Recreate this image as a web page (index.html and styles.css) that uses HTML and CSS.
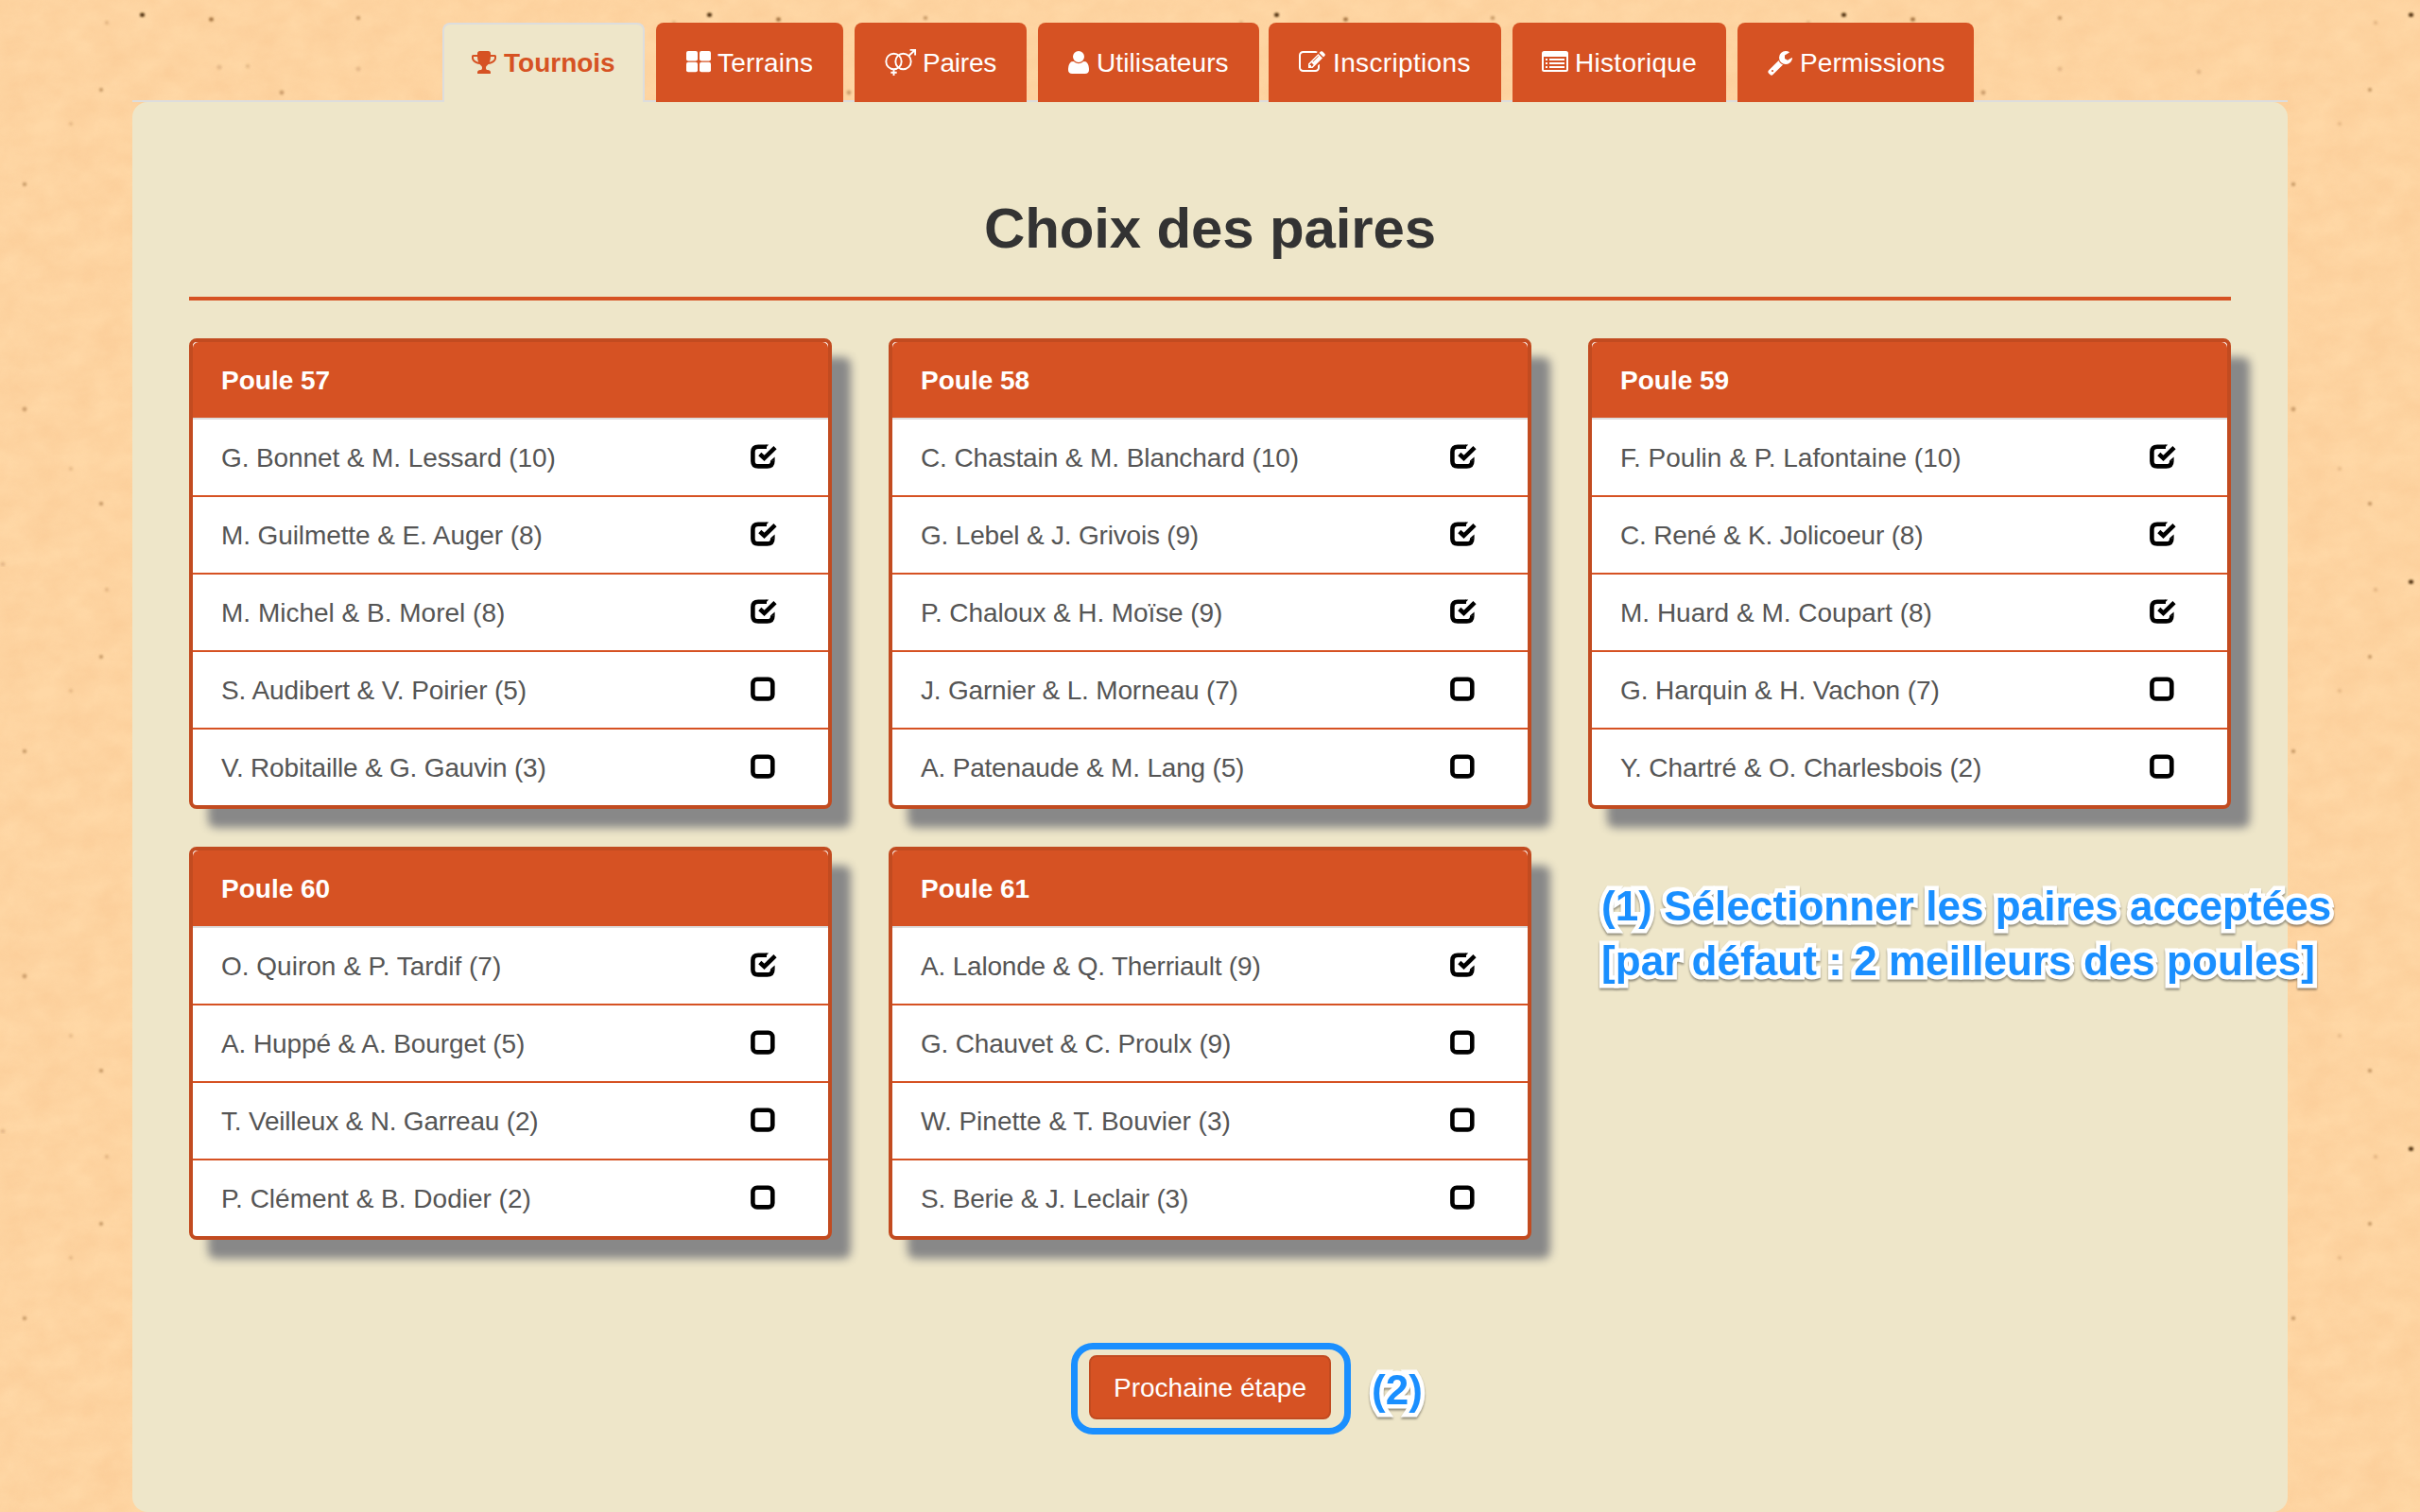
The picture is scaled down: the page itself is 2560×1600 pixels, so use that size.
FILE: index.html
```html
<!DOCTYPE html>
<html lang="fr">
<head>
<meta charset="utf-8">
<title>Choix des paires</title>
<link rel="stylesheet" href="styles.css">
</head>
<body>
<svg class="sprite" aria-hidden="true">
  <symbol id="trophy" viewBox="64 0 1664 1792"><path d="M522 883q-74-162-74-371h-256v96q0 78 94.5 162t235.5 113zm1078-275v-96h-256q0 209-74 371 141-29 235.5-113t94.5-162zm128-128v128q0 71-41.5 143t-112 130-173 97.5-215.5 44.5q-42 54-95 95-38 34-52.5 72.5t-14.5 89.5q0 54 30.5 91t97.5 37q75 0 133.5 45.5t58.5 114.5v64q0 14-9 23t-23 9h-832q-14 0-23-9t-9-23v-64q0-69 58.5-114.5t133.5-45.5q67 0 97.5-37t30.5-91q0-51-14.5-89.5t-52.5-72.5q-53-41-95-95-113-5-215.5-44.5t-173-97.5-112-130-41.5-143v-128q0-40 28-68t68-28h288v-96q0-66 47-113t113-47h576q66 0 113 47t47 113v96h288q40 0 68 28t28 68z"/></symbol>
  <symbol id="grid" viewBox="0 0 26 28"><rect y="2" width="12" height="10.4" rx="2"/><rect x="14" y="2" width="12" height="10.4" rx="2"/><rect y="13.8" width="12" height="10.4" rx="2"/><rect x="14" y="13.8" width="12" height="10.4" rx="2"/></symbol>
  <symbol id="pair" viewBox="0 0 34 28"><g fill="none" stroke="currentColor" stroke-width="1.9"><circle cx="9.5" cy="13" r="8.2"/><circle cx="19.5" cy="13" r="8.2"/><path d="M9.5 21.2V28M6.300 24.800h6.400M25.400 7L31.800 1M26.600.9h5.500v5.600"/></g></symbol>
  <symbol id="user" viewBox="192 0 1408 1792"><path d="M1600 1405q0 120-73 189.500t-194 69.500h-874q-121 0-194-69.500t-73-189.500q0-53 3.500-103.500t14-109 26.500-108.500 43-97.500 62-81 85.500-53.500 111.500-20q9 0 42 21.500t74.500 48 108 48 133.500 21.500 133.500-21.500 108-48 74.500-48 42-21.500q61 0 111.500 20t85.500 53.500 62 81 43 97.500 26.500 108.500 14 109 3.500 103.500zm-320-893q0 159-112.500 271.500t-271.500 112.500-271.500-112.500-112.500-271.500 112.500-271.500 271.500-112.500 271.500 112.500 112.500 271.500z"/></symbol>
  <symbol id="edit" viewBox="0 0 1792 1792"><path d="M888 1184l116-116-152-152-116 116v56h96v96h56zm440-720q-16-16-33 1l-350 350q-17 17-1 33t33-1l350-350q17-17 1-33zm80 594v190q0 119-84.500 203.500t-203.500 84.500h-832q-119 0-203.500-84.500t-84.500-203.500v-832q0-119 84.500-203.500t203.500-84.500h832q63 0 117 25 15 7 18 23 3 17-9 29l-49 49q-14 14-32 8-23-6-45-6h-832q-66 0-113 47t-47 113v832q0 66 47 113t113 47h832q66 0 113-47t47-113v-126q0-13 9-22l64-64q15-15 35-7t20 29zm-96-738l288 288-672 672h-288v-288zm444 132l-92 92-288-288 92-92q28-28 68-28t68 28l152 152q28 28 28 68t-28 68z"/></symbol>
  <symbol id="list" viewBox="0 0 28 28"><path fill-rule="evenodd" d="M2.500 2h23A2.500 2.500 0 0 1 28 4.500v17a2.500 2.500 0 0 1-2.500 2.500h-23A2.500 2.500 0 0 1 0 21.500v-17A2.500 2.500 0 0 1 2.500 2zM2 8v13.500q0 .5.5.5h23q.5 0 .5-.5V8z"/><path d="M4 10h2v2H4zM8 10h16v2H8zM4 14h2v2H4zM8 14h16v2H8zM4 18h2v2H4zM8 18h16v2H8z"/></symbol>
  <symbol id="wrench" viewBox="64 0 1664 1792"><path d="M448 1472q0-26-19-45t-45-19-45 19-19 45 19 45 45 19 45-19 19-45zm644-420l-682 682q-37 37-90 37-52 0-91-37l-106-108q-38-36-38-90 0-53 38-91l681-681q39 98 114.500 173.500t173.500 114.500zm634-435q0 39-23 106-47 134-164.500 217.500t-258.500 83.500q-185 0-316.500-131.500t-131.500-316.500 131.500-316.500 316.500-131.500q58 0 121.500 16.500t107.500 46.500q16 11 16 28t-16 28l-293 169v224l193 107q5-3 79-48.500t135.500-81 70.500-35.500q15 0 23.500 10t8.500 25z"/></symbol>
  <symbol id="on" viewBox="0 0 28 28"><path fill="none" stroke="#000" stroke-width="4.600" d="M17 3.700H8.100Q2.400 3.700 2.400 9.200v9.700q0 5.500 5.700 5.500h9.500q5.700 0 5.700-5.500v-.4"/><path d="M16.500 1.400h2.700L15 6h-1zM25.600 14.500v4.200H21v-.2z"/><path fill="none" stroke="#000" stroke-width="4.600" d="M9.800 11.500l4.700 4.300L26 4.700"/></symbol>
  <symbol id="off" viewBox="0 0 28 28"><rect x="2.400" y="3.700" width="20.900" height="20.700" rx="4.500" fill="none" stroke="#000" stroke-width="4.600"/></symbol>
</svg>

<nav class="tabs">
  <a class="tab active"><svg class="i26"><use href="#trophy"/></svg><span>Tournois</span></a>
  <a class="tab terrains"><svg class="i26"><use href="#grid"/></svg><span>Terrains</span></a>
  <a class="tab paires"><svg class="i34"><use href="#pair"/></svg><span>Paires</span></a>
  <a class="tab users"><svg class="i22"><use href="#user"/></svg><span>Utilisateurs</span></a>
  <a class="tab inscr"><svg class="i28"><use href="#edit"/></svg><span>Inscriptions</span></a>
  <a class="tab histo"><svg class="i28"><use href="#list"/></svg><span>Historique</span></a>
  <a class="tab perms"><svg class="i26"><use href="#wrench"/></svg><span>Permissions</span></a>
</nav>

<main class="panel">
  <h1>Choix des paires</h1>
  <div class="pools">
    <section class="pool">
      <h2>Poule 57</h2>
      <ul>
        <li><span class="snug">G. Bonnet &amp; M. Lessard (10)</span><svg><use href="#on"/></svg></li>
        <li><span class="snug">M. Guilmette &amp; E. Auger (8)</span><svg><use href="#on"/></svg></li>
        <li><span>M. Michel &amp; B. Morel (8)</span><svg><use href="#on"/></svg></li>
        <li><span class="snug">S. Audibert &amp; V. Poirier (5)</span><svg><use href="#off"/></svg></li>
        <li><span class="tight">V. Robitaille &amp; G. Gauvin (3)</span><svg><use href="#off"/></svg></li>
      </ul>
    </section>
    <section class="pool">
      <h2>Poule 58</h2>
      <ul>
        <li><span class="snug">C. Chastain &amp; M. Blanchard (10)</span><svg><use href="#on"/></svg></li>
        <li><span class="tight">G. Lebel &amp; J. Grivois (9)</span><svg><use href="#on"/></svg></li>
        <li><span class="snug">P. Chaloux &amp; H. Moïse (9)</span><svg><use href="#on"/></svg></li>
        <li><span class="tight">J. Garnier &amp; L. Morneau (7)</span><svg><use href="#off"/></svg></li>
        <li><span class="tight">A. Patenaude &amp; M. Lang (5)</span><svg><use href="#off"/></svg></li>
      </ul>
    </section>
    <section class="pool">
      <h2>Poule 59</h2>
      <ul>
        <li><span>F. Poulin &amp; P. Lafontaine (10)</span><svg><use href="#on"/></svg></li>
        <li><span class="tight">C. René &amp; K. Jolicoeur (8)</span><svg><use href="#on"/></svg></li>
        <li><span>M. Huard &amp; M. Coupart (8)</span><svg><use href="#on"/></svg></li>
        <li><span class="snug">G. Harquin &amp; H. Vachon (7)</span><svg><use href="#off"/></svg></li>
        <li><span class="snug">Y. Chartré &amp; O. Charlesbois (2)</span><svg><use href="#off"/></svg></li>
      </ul>
    </section>
    <section class="pool">
      <h2>Poule 60</h2>
      <ul>
        <li><span>O. Quiron &amp; P. Tardif (7)</span><svg><use href="#on"/></svg></li>
        <li><span class="snug">A. Huppé &amp; A. Bourget (5)</span><svg><use href="#off"/></svg></li>
        <li><span class="tight">T. Veilleux &amp; N. Garreau (2)</span><svg><use href="#off"/></svg></li>
        <li><span>P. Clément &amp; B. Dodier (2)</span><svg><use href="#off"/></svg></li>
      </ul>
    </section>
    <section class="pool">
      <h2>Poule 61</h2>
      <ul>
        <li><span class="tight">A. Lalonde &amp; Q. Therriault (9)</span><svg><use href="#on"/></svg></li>
        <li><span class="tight">G. Chauvet &amp; C. Proulx (9)</span><svg><use href="#off"/></svg></li>
        <li><span>W. Pinette &amp; T. Bouvier (3)</span><svg><use href="#off"/></svg></li>
        <li><span class="tight">S. Berie &amp; J. Leclair (3)</span><svg><use href="#off"/></svg></li>
      </ul>
    </section>
  </div>
  <div class="actions">
    <button class="next" type="button">Prochaine étape</button>
    <span class="ring"></span>
    <span class="note step2">(2)</span>
  </div>
</main>
<p class="note step1">(1) Sélectionner les paires acceptées<br>[par défaut : 2 meilleurs des poules]</p>
</body>
</html>
```
FILE: styles.css
```css
* { box-sizing: border-box; }

body {
  position: relative;
  width: 2560px;
  height: 1600px;
  margin: 0;
  padding: 24px 140px 0;
  overflow: hidden;
  color: #555;
  font: 28px/40px "Liberation Sans", Arial, sans-serif;
  /* speckled paper tile */
  background: #ffd8a6 url("data:image/svg+xml,%3Csvg xmlns='http://www.w3.org/2000/svg' width='600' height='600'%3E%3Cfilter id='n' x='0' y='0' width='100%25' height='100%25' color-interpolation-filters='sRGB'%3E%3CfeTurbulence type='fractalNoise' baseFrequency='.03 .04' numOctaves='4' stitchTiles='stitch'/%3E%3CfeColorMatrix values='0 0 0 0 .98 0 0 0 0 .79 0 0 0 0 .58 .9 0 0 0 -.15'/%3E%3C/filter%3E%3Cfilter id='b'%3E%3CfeGaussianBlur stdDeviation='.8'/%3E%3C/filter%3E%3Crect width='600' height='600' filter='url(%23n)'/%3E%3Cg fill='%23906030' filter='url(%23b)'%3E%3Cellipse cx='150.500' cy='15.700' rx='2.600' ry='2.200' fill='%23503010'/%3E%3Cellipse cx='223.500' cy='20.500' rx='2.500' ry='2.200' opacity='.8'/%3E%3Cg opacity='.45'%3E%3Ccircle cx='379' cy='19' r='2.300'/%3E%3Ccircle cx='107' cy='95' r='2.200'/%3E%3Ccircle cx='298' cy='98' r='2.400'/%3E%3Ccircle cx='26' cy='195' r='2.300'/%3E%3Ccircle cx='26' cy='433' r='2.400'/%3E%3Ccircle cx='107' cy='533' r='2.300'/%3E%3C/g%3E%3Cg opacity='.22'%3E%3Ccircle cx='113' cy='24' r='2.300'/%3E%3Ccircle cx='232' cy='71' r='2.600'/%3E%3Ccircle cx='262' cy='70' r='2.300'/%3E%3Ccircle cx='75' cy='131' r='2'/%3E%3Ccircle cx='75' cy='496' r='2'/%3E%3Ccircle cx='3' cy='597' r='2.500'/%3E%3Ccircle cx='379' cy='73' r='2.500'/%3E%3Ccircle cx='526' cy='76' r='2.500'/%3E%3C/g%3E%3C/g%3E%3C/svg%3E");
}

.sprite { display: none; }
svg { fill: currentColor; flex: none; overflow: visible; }

.tabs {
  display: flex;
  height: 84px;
  padding-left: 328px;
  background: linear-gradient(#ddd, #ddd) 0 100% / 100% 2px no-repeat;
}
.tab {
  display: flex;
  width: 214px;
  height: 84px;
  margin-right: 12px;
  padding: 28px 0 0 32px;
  border-radius: 8px 8px 0 0;
  background: #d65223;
  color: #fff;
  line-height: 30px;
  white-space: nowrap;
}
.tab svg { height: 28px; margin-right: 7px; }
.tab.active {
  padding: 26px 0 0 29px;
  border: 2px solid #ddd;
  border-bottom: 0;
  background: #eee6c9;
  color: #d65223;
  font-weight: 700;
}
.tab.active svg { margin-right: 8px; }
.tab.terrains { width: 198px; letter-spacing: .2px; }
.tab.paires { width: 182px; letter-spacing: -.2px; }
.tab.paires svg { margin-right: 6px; }
.tab.users { width: 234px; margin-right: 10px; letter-spacing: .1px; }
.tab.users svg { margin-right: 8px; }
.tab.inscr { width: 246px; letter-spacing: .35px; }
.tab.inscr svg { margin-right: 8px; }
.tab.histo { width: 226px; padding-left: 31px; letter-spacing: .3px; }
.tab.perms { width: 250px; letter-spacing: .1px; }
.tab.perms svg { margin-right: 8px; }
.i22 { width: 22px; }
.i26 { width: 26px; }
.i28 { width: 28px; }
.i34 { width: 34px; }

.panel {
  height: 1492px;
  padding: 0 60px;
  border-radius: 16px;
  background: #eee6c9;
}
h1 {
  height: 210px;
  margin: 0 0 40px;
  padding-top: 98px;
  border-bottom: 4px solid #d65223;
  color: #333;
  font-size: 60px;
  line-height: 72px;
  letter-spacing: -.15px;
  text-align: center;
}

.pools {
  display: grid;
  grid-template-columns: repeat(3, 680px);
  gap: 40px 60px;
  align-items: start;
}
.pool {
  border: 4px solid #c24b20;
  border-radius: 8px;
  background: #fff;
  box-shadow: 20px 20px 10px #888;
}
.pool h2 {
  height: 82px;
  margin: 0;
  padding: 21px 30px 0;
  border-bottom: 2px solid #ddd;
  border-radius: 6px 6px 0 0;
  background: #d65223;
  color: #fff;
  font-size: 28px;
  line-height: 40px;
}
.pool ul { margin: 0; padding: 0; list-style: none; }
.pool li {
  display: flex;
  justify-content: space-between;
  height: 82px;
  padding: 21px 54px 0 30px;
  border-bottom: 2px solid #d65223;
  white-space: nowrap;
}
.pool li:last-child { height: 80px; border-bottom: 0; }
.pool li svg { width: 28px; height: 28px; margin-top: 4px; color: #000; }
.snug { letter-spacing: -.1px; }
.tight { letter-spacing: -.19px; }

.actions {
  position: relative;
  display: flex;
  justify-content: center;
  margin-top: 122px;
}
.next {
  width: 256px;
  height: 68px;
  padding: 1px 0 0;
  border: 2px solid #c24b20;
  border-radius: 8px;
  background: #d65223;
  color: #fff;
  font: inherit;
}
.ring {
  position: absolute;
  left: 933px;
  top: -13px;
  width: 296px;
  height: 97px;
  border: 7px solid #1a8fff;
  border-radius: 23px;
}
.note {
  position: absolute;
  margin: 0;
  color: #1a8fff;
  font-size: 44px;
  font-weight: 700;
  line-height: 58px;
  letter-spacing: .05px;
  white-space: nowrap;
  -webkit-text-stroke: 9px #fff;
  paint-order: stroke fill;
  stroke-linejoin: round;
  filter: drop-shadow(0 2px 1px rgba(0, 0, 0, .4));
}
.step1 { left: 1694px; top: 930px; }
.step2 { left: 1251px; top: 8px; }
```
